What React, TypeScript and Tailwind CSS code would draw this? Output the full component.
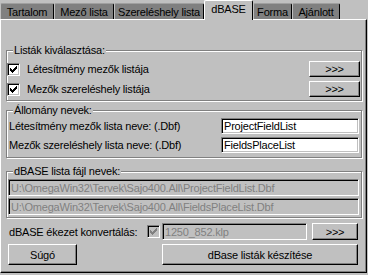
import React from 'react'

const tabs = [
  { label: 'Tartalom', w: 'w-[54px]' },
  { label: 'Mező lista', w: 'w-[60px]' },
  { label: 'Szereléshely lista', w: 'w-[90px]' },
  { label: 'dBASE', w: 'w-[49px]', active: true },
  { label: 'Forma', w: 'w-[39px]' },
  { label: 'Ajánlott', w: 'w-[48px]' },
]

const sunken =
  'border border-t-[#808080] border-l-[#808080] border-b-white border-r-white shadow-[inset_1px_1px_0_#000,inset_-1px_-1px_0_#c0c0c0]'

const raised =
  'border border-t-white border-l-white border-b-black border-r-black shadow-[inset_-1px_-1px_0_#808080]'

function Check({ disabled = false }: { disabled?: boolean }) {
  return (
    <div
      className={`flex h-[13px] w-[13px] shrink-0 items-center justify-center ${sunken} ${disabled ? 'bg-[#c0c0c0]' : 'bg-white'}`}
    >
      <svg width="7" height="7" viewBox="0 0 7 7" shapeRendering="crispEdges">
        <path
          fill={disabled ? '#808080' : '#000'}
          d="M0 2h1v3H0z M1 3h1v3H1z M2 4h1v3H2z M3 3h1v3H3z M4 2h1v3H4z M5 1h1v3H5z M6 0h1v3H6z"
        />
      </svg>
    </div>
  )
}

function Btn({ className = '', children }: { className?: string; children: React.ReactNode }) {
  return (
    <div className={`flex shrink-0 items-center justify-center bg-[#c0c0c0] ${raised} ${className}`}>
      {children}
    </div>
  )
}

function Field({ value, disabled = false, className = '' }: { value: string; disabled?: boolean; className?: string }) {
  return (
    <div
      className={`flex shrink-0 items-center overflow-hidden whitespace-nowrap pl-[2px] ${sunken} ${
        disabled ? 'bg-[#c0c0c0] text-[#808080]' : 'bg-white'
      } ${className}`}
    >
      {value}
    </div>
  )
}

function Group({ title, className = '', children }: { title: string; className?: string; children: React.ReactNode }) {
  return (
    <fieldset
      className={`ml-[5px] mr-[4px] border border-[#808080] shadow-[inset_1px_1px_0_#fff,1px_1px_0_#fff] ${className}`}
    >
      <legend className="ml-[6px] bg-[#c0c0c0] px-[1px] leading-[12px]">{title}</legend>
      {children}
    </fieldset>
  )
}

export default function App() {
  return (
    <div className="flex h-[275px] w-[368px] flex-col overflow-hidden bg-[#c0c0c0] font-['Liberation_Sans',Arial,sans-serif] text-[11px] leading-[12px] tracking-[-0.2px] text-black">
      {/* Fülek */}
      <div className="flex h-[19px] items-end">
        {tabs.map(t =>
          t.active ? (
            <div
              key={t.label}
              className={`relative z-10 -mb-px flex h-[20px] items-start justify-center rounded-t-[2px] border-l border-t border-r border-l-white border-t-white border-r-black bg-[#c0c0c0] pt-[2px] ${t.w}`}
            >
              {t.label}
            </div>
          ) : (
            <div
              key={t.label}
              className={`flex h-[16px] items-center justify-center rounded-t-[2px] border-l border-t border-r border-l-[#c0c0c0] border-t-[#a0a0a0] border-r-black bg-[#808080] pt-[1px] ${t.w}`}
            >
              {t.label}
            </div>
          )
        )}
      </div>

      {/* Panel */}
      <div className="flex h-[254px] w-[367px] flex-col border-l border-t border-r border-b border-l-white border-t-white border-r-black border-b-black shadow-[inset_-1px_-1px_0_#808080]">
        <Group title="Listák kiválasztása:" className="mt-[24px] pb-[3px]">
          <div className="mt-[5px] flex h-[16px] items-center">
            <Check />
            <span className="ml-[7px]">Létesítmény mezők listája</span>
            <Btn className="ml-auto mr-[1px] h-[16px] w-[51px]">&gt;&gt;&gt;</Btn>
          </div>
          <div className="mt-[4px] flex h-[16px] items-center">
            <Check />
            <span className="ml-[7px]">Mezők szereléshely listája</span>
            <Btn className="ml-auto mr-[1px] h-[16px] w-[51px]">&gt;&gt;&gt;</Btn>
          </div>
        </Group>

        <Group title="Állomány nevek:" className="mt-[3px] pb-[4px]">
          <div className="mt-[2px] flex h-[16px] items-center pl-[2px]">
            <span>Létesítmény mezők lista neve: (.Dbf)</span>
            <Field value="ProjectFieldList" className="ml-auto mr-[2px] h-[16px] w-[138px]" />
          </div>
          <div className="mt-[3px] flex h-[16px] items-center pl-[2px]">
            <span>Mezők szereléshely lista neve: (.Dbf)</span>
            <Field value="FieldsPlaceList" className="ml-auto mr-[2px] h-[16px] w-[138px]" />
          </div>
        </Group>

        <Group title="dBASE lista fájl nevek:" className="mt-[7px] pb-[2px]">
          <div className="mt-[2px] flex flex-col gap-[2px] pl-[1px] pr-[2px]">
            <Field disabled value="U:\OmegaWin32\Tervek\Sajo400.All\ProjectFieldList.Dbf" className="h-[17px]" />
            <Field disabled value="U:\OmegaWin32\Tervek\Sajo400.All\FieldsPlaceList.Dbf" className="h-[17px]" />
          </div>
        </Group>

        <div className="mt-[5px] flex h-[17px] items-center pl-[8px]">
          <span className="w-[138px]">dBASE ékezet konvertálás:</span>
          <Check disabled />
          <Field disabled value="1250_852.klp" className="ml-[2px] h-[17px] w-[145px]" />
          <Btn className="ml-[5px] h-[17px] w-[46px]">&gt;&gt;&gt;</Btn>
        </div>

        <div className="mt-[4px] flex h-[21px] items-stretch pl-[7px]">
          <Btn className="w-[69px]">Súgó</Btn>
          <Btn className="ml-[85px] w-[196px]">dBase listák készítése</Btn>
        </div>
      </div>
    </div>
  )
}
